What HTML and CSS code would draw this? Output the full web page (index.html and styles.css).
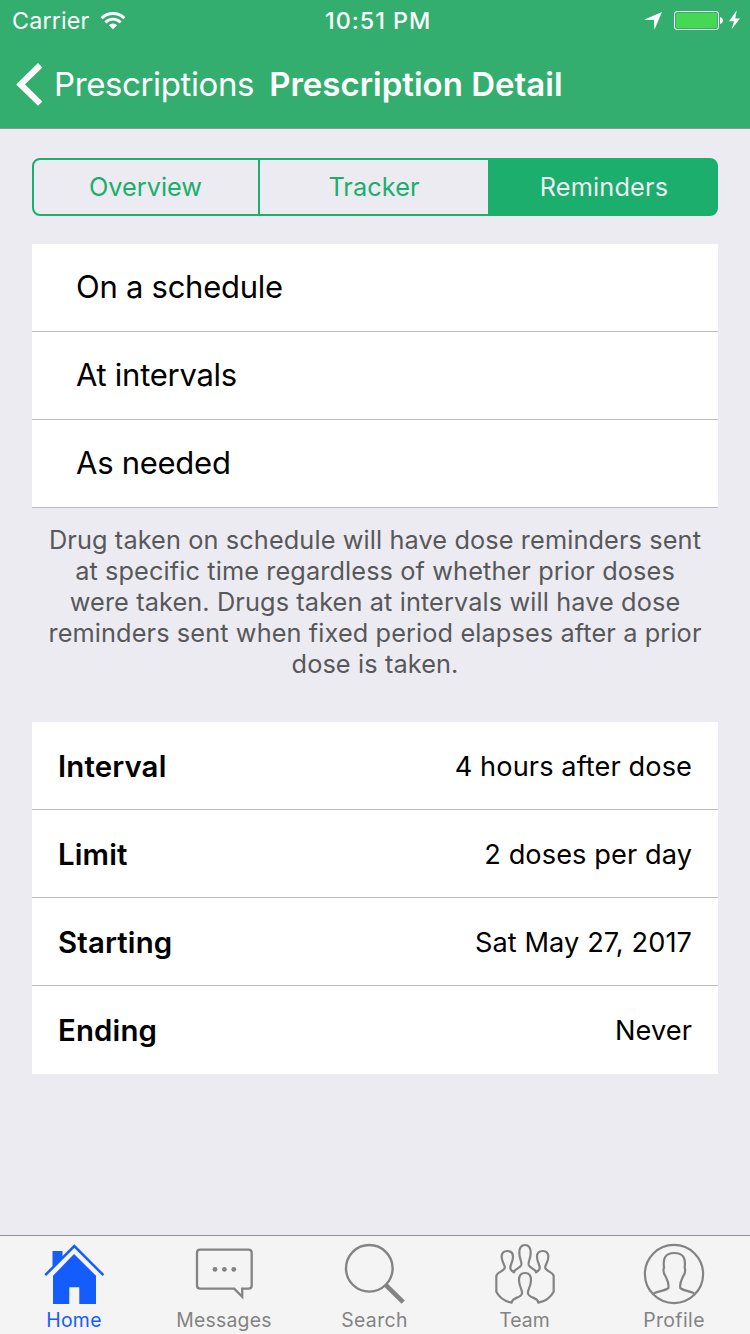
FILE: index.html
```html
<!DOCTYPE html>
<html lang="en">
<head>
<meta charset="utf-8">
<title>Prescription Detail</title>
<link rel="stylesheet" href="styles.css">
</head>
<body>
<div class="screen">
  <header class="header">
    <div class="status">
      <div class="status-left">
        <span>Carrier</span>
        <svg class="wifi" width="26" height="20" viewBox="0 0 26 20">
          <g fill="none" stroke="#fff" stroke-width="2.8">
            <path d="M1.6 8.2A16.2 16.2 0 0 1 24.4 8.2"/>
            <path d="M5.4 12.4A10.6 10.6 0 0 1 20.6 12.4"/>
          </g>
          <path d="M13 19.2 8.9 15.2A5.8 5.8 0 0 1 17.1 15.2Z" fill="#fff"/>
        </svg>
      </div>
      <span class="time">10:51 PM</span>
      <svg class="status-icons" width="100" height="22" viewBox="640 10 100 22">
        <path d="M662 12 654.4 29.7 654 20 644 19.7Z" fill="#fff"/>
        <rect x="674.5" y="11.5" width="44" height="18" rx="2.5" fill="none" stroke="#fff"/>
        <rect x="676" y="13" width="41" height="15" rx="1.2" fill="#46d755"/>
        <path d="M720 17.3h.8q2.2.8 2.2 3.2t-2.2 3.2h-.8Z" fill="#fff"/>
        <path d="M736.8 10.2 729 21.2h5L731.6 29.3 740 18.4h-4.8Z" fill="#fff"/>
      </svg>
    </div>
    <nav class="nav">
      <svg class="chevron" width="28" height="44" viewBox="0 0 28 44">
        <path d="M25.2 3.2 5.6 22.4 25.2 41.6" fill="none" stroke="#fff" stroke-width="6.2"/>
      </svg>
      <span class="back">Prescriptions</span>
      <h1 class="title">Prescription Detail</h1>
    </nav>
  </header>

  <main class="content">
    <div class="segments">
      <div class="segment segment-first">Overview</div>
      <div class="segment segment-second">Tracker</div>
      <div class="segment segment-active">Reminders</div>
    </div>

    <ul class="options">
      <li class="option">On a schedule</li>
      <li class="option">At intervals</li>
      <li class="option">As needed</li>
    </ul>

    <p class="note">Drug taken on schedule will have dose reminders sent<br>at specific time regardless of whether prior doses<br>were taken. Drugs taken at intervals will have dose<br>reminders sent when fixed period elapses after a prior<br>dose is taken.</p>

    <dl class="details">
      <div class="detail"><dt>Interval</dt><dd>4 hours after dose</dd></div>
      <div class="detail"><dt>Limit</dt><dd>2 doses per day</dd></div>
      <div class="detail"><dt>Starting</dt><dd>Sat May 27, 2017</dd></div>
      <div class="detail"><dt>Ending</dt><dd>Never</dd></div>
    </dl>
  </main>

  <footer class="tabs">
    <div class="tab tab-active">
      <svg width="64" height="64" viewBox="0 0 64 64">
        <path d="M32 12 11 33.8V62H27.3V45.3H37.3V62H54V33.8Z" fill="currentColor"/>
        <path d="M10.5 9H20.5V14.8L10.5 24.8Z" fill="currentColor"/>
        <path d="M3.2 33.2 32.3 4 61.4 33.2" fill="none" stroke="currentColor" stroke-width="2.5"/>
      </svg>
      <span class="label-home">Home</span>
    </div>
    <div class="tab">
      <svg width="64" height="64" viewBox="0 0 64 64">
        <path d="M8.2 7.7H56.5Q59.7 7.7 59.7 10.9V43.5Q59.7 46.7 56.5 46.7H50.2V54.8L42.2 46.7H8.2Q5 46.7 5 43.5V10.9Q5 7.7 8.2 7.7Z" fill="none" stroke="currentColor" stroke-width="2.3"/>
        <g fill="currentColor"><circle cx="23" cy="27.3" r="2.4"/><circle cx="32.4" cy="27.3" r="2.4"/><circle cx="41.8" cy="27.3" r="2.4"/></g>
      </svg>
      <span class="label-messages">Messages</span>
    </div>
    <div class="tab">
      <svg width="64" height="64" viewBox="0 0 64 64" fill="none" stroke="currentColor">
        <circle cx="27.3" cy="26.3" r="23.3" stroke-width="2.4"/>
        <path d="M43.6 42.8 61.2 60.2" stroke-width="4.6"/>
      </svg>
      <span class="label-search">Search</span>
    </div>
    <div class="tab">
      <svg width="64" height="64" viewBox="51 36 192 192" fill="none" stroke="currentColor" stroke-width="6.6" stroke-linejoin="round">
        <path d="M110 218C90 214 72 200 64 185V138C66 126 84 125 89 115C92 105 80 98 80 80C80 68 87 63 97 63C107 63 114 68 114 80C114 97 104 106 106 115C108 122 113 124 117 127C119 114 136 117 139 104C141 93 133 88 133 68C133 52 139 45 150 45C161 45 167 52 167 68C167 88 159 93 161 104C164 117 181 114 183 127C187 124 192 122 194 115C196 106 186 97 186 80C186 68 193 63 203 63C213 63 220 68 220 80C220 98 208 105 211 115C216 125 234 126 236 138V185C228 200 210 214 190 218C188 200 162 206 159 190C157 178 168 172 168 150C168 135 161 129 150 129C139 129 132 135 132 150C132 172 143 178 141 190C138 206 112 200 110 218Z"/>
      </svg>
      <span class="label-team">Team</span>
    </div>
    <div class="tab">
      <svg width="64" height="64" viewBox="51 36 192 192" fill="none" stroke="currentColor" stroke-width="6.6">
        <circle cx="147" cy="132" r="87.3"/>
        <path d="M86 190C104 182 125 181 130 174C133 160 127 150 122 140C116 132 114 122 117 112C114 88 118 69 148 69C178 69 182 88 179 112C182 122 180 132 174 140C169 150 163 160 166 174C171 181 190 182 208 190"/>
      </svg>
      <span class="label-profile">Profile</span>
    </div>
  </footer>
</div>
</body>
</html>
```
FILE: styles.css
```css
* { box-sizing: border-box; }

body {
  margin: 0;
  font-family: Inter, "Liberation Sans", sans-serif;
  color: #000;
}

.screen {
  display: flex;
  flex-direction: column;
  width: 750px;
  height: 1334px;
  background: #ebebf1;
  overflow: hidden;
}

.header {
  height: 129px;
  background: #34ae6f;
  border-bottom: 1px solid #8c9691;
  color: #fff;
}

.status {
  display: grid;
  grid-template-columns: 313px 1fr auto;
  align-items: center;
  height: 41px;
  padding: 0 10px 0 12px;
  font-size: 23.3px;
}

.status-left { display: flex; align-items: center; gap: 10.5px; }
.status-left span { letter-spacing: 0.15px; }
.time { font-weight: 500; letter-spacing: 1px; }
.status-icons { margin-top: 1px; }
.wifi { margin-top: -1px; }

.nav {
  display: flex;
  align-items: center;
  height: 87px;
  padding: 0 0 2px 15px;
  font-size: 33px;
}

.chevron { margin-top: 1px; }
.back { margin-left: 11px; letter-spacing: -0.38px; }
.title {
  margin: 0 0 0 15px;
  font-size: 33px;
  font-weight: 600;
  letter-spacing: 0;
  white-space: nowrap;
}

.content { flex: 1; padding: 29px 32px 0; }

.segments {
  display: flex;
  height: 58px;
  border: 2px solid #1bae6d;
  border-radius: 8px;
  overflow: hidden;
  background: linear-gradient(90deg, #ebebf1 456px, #1bae6d 456px) border-box;
  color: #1bae6d;
  font-size: 25.3px;
}

.segment { display: flex; align-items: center; justify-content: center; padding-bottom: 2px; }
.segment-first { width: 226px; padding-right: 1px; border-right: 2px solid #1bae6d; }
.segment-second { width: 228px; letter-spacing: 0.08px; }
.segment-active {
  flex: 1;
  padding-left: 4px;
  background: #1bae6d;
  color: #ebebf1;
  letter-spacing: 0.15px;
}

.options { margin: 28px 0 0; padding: 0; list-style: none; }

.option {
  display: flex;
  align-items: center;
  height: 88px;
  padding: 0 0 3px 44px;
  background: #fff;
  border-bottom: 1px solid #bcbbc1;
  font-size: 31px;
  letter-spacing: -0.26px;
}

.note {
  margin: 16px 0 43px;
  font-size: 25.3px;
  line-height: 31px;
  letter-spacing: 0.11px;
  text-align: center;
  white-space: nowrap;
  color: #58585a;
}

.details { margin: 0; background: #fff; }

.detail {
  display: flex;
  align-items: center;
  justify-content: space-between;
  height: 88px;
  padding: 1px 26px 0;
  border-bottom: 1px solid #bcbbc1;
}
.detail:last-child { border-bottom-color: #fff; }
.detail dt { font-size: 29.4px; font-weight: 600; letter-spacing: 0.15px; }
.detail dd { margin: 0; font-size: 27.2px; letter-spacing: 0.08px; }

.tabs {
  display: flex;
  height: 99px;
  background: #f4f4f5;
  border-top: 1px solid #919095;
  color: #838383;
}

.tab {
  display: flex;
  flex-direction: column;
  align-items: center;
  width: 150px;
  padding: 6px 2px 0 0;
  font-size: 19.4px;
  line-height: 28px;
}
.tab-active { color: #145dfb; }
.label-home { letter-spacing: 0.33px; }
.label-messages { letter-spacing: 0.23px; }
.label-search { padding-left: 1px; letter-spacing: 0.4px; }
.label-team { margin-left: 1px; }
.label-profile { letter-spacing: 0.41px; }
```
